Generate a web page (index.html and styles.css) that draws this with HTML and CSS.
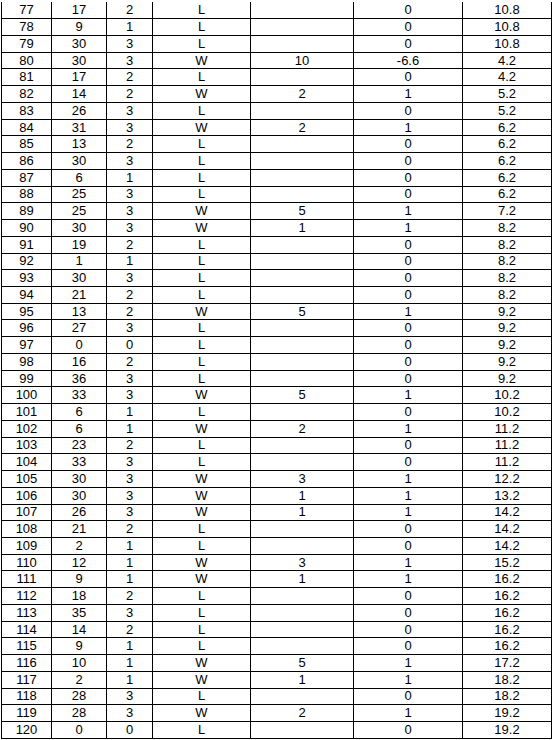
FILE: index.html
```html
<!DOCTYPE html>
<html>
<head>
<meta charset="utf-8">
<link rel="stylesheet" href="styles.css">
</head>
<body>
<table class="grid">
<colgroup>
<col class="c1"><col class="c2"><col class="c3"><col class="c4"><col class="c5"><col class="c6"><col class="c7">
</colgroup>
<tbody>
<tr><td>77</td><td>17</td><td>2</td><td>L</td><td></td><td>0</td><td>10.8</td></tr>
<tr><td>78</td><td>9</td><td>1</td><td>L</td><td></td><td>0</td><td>10.8</td></tr>
<tr><td>79</td><td>30</td><td>3</td><td>L</td><td></td><td>0</td><td>10.8</td></tr>
<tr><td>80</td><td>30</td><td>3</td><td>W</td><td>10</td><td>-6.6</td><td>4.2</td></tr>
<tr><td>81</td><td>17</td><td>2</td><td>L</td><td></td><td>0</td><td>4.2</td></tr>
<tr><td>82</td><td>14</td><td>2</td><td>W</td><td>2</td><td>1</td><td>5.2</td></tr>
<tr><td>83</td><td>26</td><td>3</td><td>L</td><td></td><td>0</td><td>5.2</td></tr>
<tr><td>84</td><td>31</td><td>3</td><td>W</td><td>2</td><td>1</td><td>6.2</td></tr>
<tr><td>85</td><td>13</td><td>2</td><td>L</td><td></td><td>0</td><td>6.2</td></tr>
<tr><td>86</td><td>30</td><td>3</td><td>L</td><td></td><td>0</td><td>6.2</td></tr>
<tr><td>87</td><td>6</td><td>1</td><td>L</td><td></td><td>0</td><td>6.2</td></tr>
<tr><td>88</td><td>25</td><td>3</td><td>L</td><td></td><td>0</td><td>6.2</td></tr>
<tr><td>89</td><td>25</td><td>3</td><td>W</td><td>5</td><td>1</td><td>7.2</td></tr>
<tr><td>90</td><td>30</td><td>3</td><td>W</td><td>1</td><td>1</td><td>8.2</td></tr>
<tr><td>91</td><td>19</td><td>2</td><td>L</td><td></td><td>0</td><td>8.2</td></tr>
<tr><td>92</td><td>1</td><td>1</td><td>L</td><td></td><td>0</td><td>8.2</td></tr>
<tr><td>93</td><td>30</td><td>3</td><td>L</td><td></td><td>0</td><td>8.2</td></tr>
<tr><td>94</td><td>21</td><td>2</td><td>L</td><td></td><td>0</td><td>8.2</td></tr>
<tr><td>95</td><td>13</td><td>2</td><td>W</td><td>5</td><td>1</td><td>9.2</td></tr>
<tr><td>96</td><td>27</td><td>3</td><td>L</td><td></td><td>0</td><td>9.2</td></tr>
<tr><td>97</td><td>0</td><td>0</td><td>L</td><td></td><td>0</td><td>9.2</td></tr>
<tr><td>98</td><td>16</td><td>2</td><td>L</td><td></td><td>0</td><td>9.2</td></tr>
<tr><td>99</td><td>36</td><td>3</td><td>L</td><td></td><td>0</td><td>9.2</td></tr>
<tr><td>100</td><td>33</td><td>3</td><td>W</td><td>5</td><td>1</td><td>10.2</td></tr>
<tr><td>101</td><td>6</td><td>1</td><td>L</td><td></td><td>0</td><td>10.2</td></tr>
<tr><td>102</td><td>6</td><td>1</td><td>W</td><td>2</td><td>1</td><td>11.2</td></tr>
<tr><td>103</td><td>23</td><td>2</td><td>L</td><td></td><td>0</td><td>11.2</td></tr>
<tr><td>104</td><td>33</td><td>3</td><td>L</td><td></td><td>0</td><td>11.2</td></tr>
<tr><td>105</td><td>30</td><td>3</td><td>W</td><td>3</td><td>1</td><td>12.2</td></tr>
<tr><td>106</td><td>30</td><td>3</td><td>W</td><td>1</td><td>1</td><td>13.2</td></tr>
<tr><td>107</td><td>26</td><td>3</td><td>W</td><td>1</td><td>1</td><td>14.2</td></tr>
<tr><td>108</td><td>21</td><td>2</td><td>L</td><td></td><td>0</td><td>14.2</td></tr>
<tr><td>109</td><td>2</td><td>1</td><td>L</td><td></td><td>0</td><td>14.2</td></tr>
<tr><td>110</td><td>12</td><td>1</td><td>W</td><td>3</td><td>1</td><td>15.2</td></tr>
<tr><td>111</td><td>9</td><td>1</td><td>W</td><td>1</td><td>1</td><td>16.2</td></tr>
<tr><td>112</td><td>18</td><td>2</td><td>L</td><td></td><td>0</td><td>16.2</td></tr>
<tr><td>113</td><td>35</td><td>3</td><td>L</td><td></td><td>0</td><td>16.2</td></tr>
<tr><td>114</td><td>14</td><td>2</td><td>L</td><td></td><td>0</td><td>16.2</td></tr>
<tr><td>115</td><td>9</td><td>1</td><td>L</td><td></td><td>0</td><td>16.2</td></tr>
<tr><td>116</td><td>10</td><td>1</td><td>W</td><td>5</td><td>1</td><td>17.2</td></tr>
<tr><td>117</td><td>2</td><td>1</td><td>W</td><td>1</td><td>1</td><td>18.2</td></tr>
<tr><td>118</td><td>28</td><td>3</td><td>L</td><td></td><td>0</td><td>18.2</td></tr>
<tr><td>119</td><td>28</td><td>3</td><td>W</td><td>2</td><td>1</td><td>19.2</td></tr>
<tr><td>120</td><td>0</td><td>0</td><td>L</td><td></td><td>0</td><td>19.2</td></tr>
</tbody>
</table>
</body>
</html>
```
FILE: styles.css
```css
html, body {
  margin: 0;
  padding: 0;
  background: #ffffff;
}
body {
  padding: 2px 0 0 1px;
  font-family: "Liberation Sans", Arial, sans-serif;
  font-size: 13px;
  color: #000000;
}
.grid {
  border-collapse: collapse;
  table-layout: fixed;
  width: 550px;
}
.c1 { width: 50px; }
.c2 { width: 55px; }
.c3 { width: 46px; }
.c4 { width: 98px; }
.c5 { width: 103px; }
.c6 { width: 109px; }
.c7 { width: 89px; }
.grid tr {
  height: 16.74px;
}
.grid td {
  border: 1px solid #000000;
  padding: 0;
  text-align: center;
  vertical-align: middle;
  line-height: 14px;
}
.grid tr:first-child td {
  border-top: none;
}
```
